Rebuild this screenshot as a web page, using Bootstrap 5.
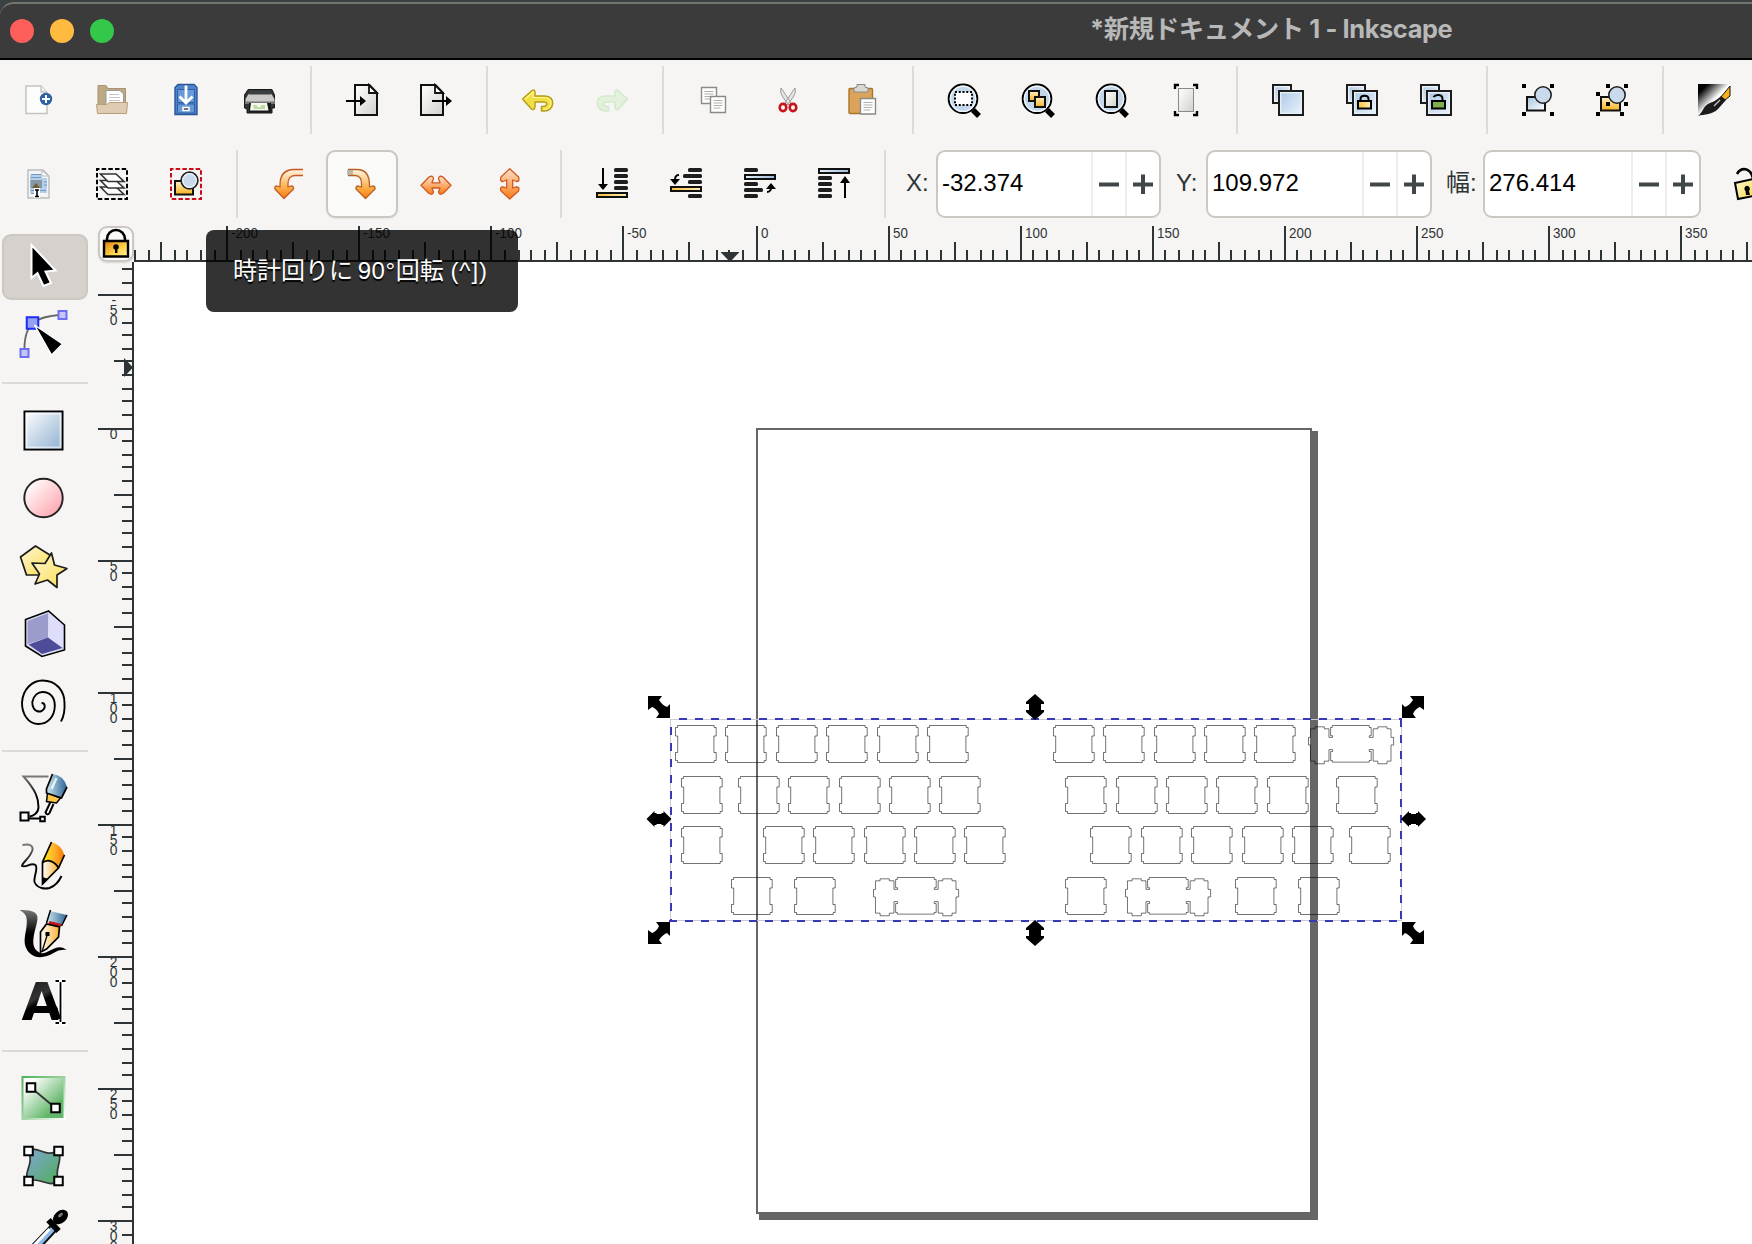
<!DOCTYPE html>
<html lang="ja">
<head>
<meta charset="utf-8">
<title>*新規ドキュメント 1 - Inkscape</title>
<link rel="stylesheet" href="https://cdn.jsdelivr.net/npm/bootstrap@5.3.0/dist/css/bootstrap.min.css">
<script src="https://cdn.jsdelivr.net/npm/bootstrap@5.3.0/dist/js/bootstrap.bundle.min.js"></script>
<style>
html,body{height:100%;overflow:hidden}
body{font-family:"Liberation Sans","Noto Sans CJK JP",sans-serif;background:#3a4142;color:#2e3436;line-height:1}
.app{width:1752px;height:1244px;padding-top:2px}
.app svg{display:block;flex:none}
.titlebar{height:58px;background:#3b3b3b;border-top:2px solid #75756f;border-bottom:2px solid #000;border-radius:14px 0 0 0;flex:none}
.lights{padding-left:10px;gap:16px}
.light{width:24px;height:24px;border-radius:50%;margin-top:-1px}
.wtitle{font:700 25.4px Inter,"Noto Sans CJK JP",sans-serif;letter-spacing:-.4px;line-height:30px;color:#b8b8b8;left:1090px;top:10px;white-space:nowrap}
.work{background:#f6f5f4}
.tbar{height:68px;padding-left:1px;flex:none;margin-bottom:16px}
.cmd{margin-top:6px}
.tb{width:74px;height:68px;flex:none;display:flex;align-items:center;justify-content:center}
.tb.hot{width:72px;margin:0 1px;background:#fafaf9;border:2px solid #cdc7c2;border-radius:9px;box-shadow:0 1px 2px #0001}
.vs{width:2px;margin:0 13px;background:#dcdad7;flex:none}
.spin{border:2px solid #cdc7c2;border-radius:9px;background:#fff;height:68px;flex:none;font-size:24px;color:#000}
.spin .val{flex:1;padding:0 0 3px 4px}
.spin .pm{width:34px;border-left:2px solid #efeeed;display:flex;align-items:center;justify-content:center}
.lbl{font-size:24px;padding-bottom:3px;flex:none;white-space:nowrap}
.side{width:98px;padding:8px 0 0 2px;flex:none}
.tool{width:86px;height:66px;margin-bottom:2px;padding-right:4px;display:flex;align-items:center;justify-content:center;flex:none}
.tool.sel{background:#d6d1cd;border:2px solid #cdc7c2;border-radius:9px;padding-right:2px}
.hs{width:86px;height:2px;background:#dcdad7;margin:12px 0 14px;flex:none}
.lockbtn{width:36px;height:36px;border:2px solid #cdc7c2;border-radius:9px;background:#fafaf9;flex:none;box-shadow:0 1px 2px #0002}
.tip{left:206px;top:230px;width:312px;height:82px;border-radius:8px;background:rgba(0,0,0,.8);color:#fff;font-size:24px;text-shadow:0 2px 1px #000;padding:29px 0 0 27px;white-space:nowrap;z-index:5}
.num{margin-left:-2px;letter-spacing:.6px}
.keys{letter-spacing:.9px}
text{font-family:"Liberation Sans",sans-serif;fill:#2e3436}
</style>
</head>
<body>
<svg width="0" height="0" class="position-absolute">
<defs>
<linearGradient id="blu" x2="1" y2="1"><stop stop-color="#fff"/><stop offset="1" stop-color="#8fb0d0"/></linearGradient>
<linearGradient id="blf" x2="1" y2="1"><stop stop-color="#a9c6e4"/><stop offset="1" stop-color="#eef5fb"/></linearGradient>
<linearGradient id="blr" x1="1" y1="1" x2="0" y2="0"><stop stop-color="#fff"/><stop offset="1" stop-color="#a9c3df"/></linearGradient>
<linearGradient id="pnk" x2="1" y2="1"><stop offset=".1" stop-color="#fff"/><stop offset="1" stop-color="#ff9aa5"/></linearGradient>
<linearGradient id="yel" x2="1" y2="1"><stop stop-color="#fff8d8"/><stop offset="1" stop-color="#fbdc4c"/></linearGradient>
<linearGradient id="gld" x2="0" y2="1"><stop stop-color="#fff0c8"/><stop offset="1" stop-color="#f8b41c"/></linearGradient>
<linearGradient id="gls" x2="1"><stop stop-color="#f9bf3c"/><stop offset="1" stop-color="#fff0b8"/></linearGradient>
<linearGradient id="bls" x2="1"><stop stop-color="#e8f1fa"/><stop offset="1" stop-color="#9dbbdb"/></linearGradient>
<linearGradient id="org" x2="0" y2="1"><stop stop-color="#fde0cc"/><stop offset="1" stop-color="#fb7c14"/></linearGradient>
<linearGradient id="ory" x2="0" y2="1"><stop stop-color="#fff6e6"/><stop offset=".6" stop-color="#fcb24e"/><stop offset="1" stop-color="#f9780c"/></linearGradient>
<linearGradient id="gry" x2="1" y2="1"><stop stop-color="#fff"/><stop offset="1" stop-color="#d2d2cc"/></linearGradient>
<linearGradient id="grn" x2="1" y2="1"><stop offset=".15" stop-color="#fff"/><stop offset=".75" stop-color="#63b76a"/></linearGradient>
<linearGradient id="grb" x1="0" x2="1" y2="1"><stop stop-color="#4fb358"/><stop offset=".5" stop-color="#9fd3a3"/><stop offset="1" stop-color="#fff"/></linearGradient>
<linearGradient id="msh" x2="1" y2="1"><stop stop-color="#7fa6d6"/><stop offset="1" stop-color="#4fae57"/></linearGradient>
<linearGradient id="pen" x2="1"><stop stop-color="#cfeaf2"/><stop offset="1" stop-color="#2d6494"/></linearGradient>
<linearGradient id="pcl" x2="1"><stop stop-color="#ffee00"/><stop offset=".5" stop-color="#ffb52e"/><stop offset="1" stop-color="#f57900"/></linearGradient>
<linearGradient id="wht" x2="1"><stop stop-color="#fff"/><stop offset="1" stop-color="#f8b030"/></linearGradient>
<linearGradient id="blk" x2="1" y2="1"><stop stop-color="#000"/><stop offset=".15" stop-color="#000"/><stop offset=".5" stop-color="#fff"/></linearGradient>
<linearGradient id="ink" x2=".4" y2="1"><stop stop-color="#111"/><stop offset=".5" stop-color="#333"/><stop offset=".6" stop-color="#000"/></linearGradient>
<linearGradient id="lck" x2="1" y2="1"><stop stop-color="#e07c10"/><stop offset=".6" stop-color="#ffd54a"/><stop offset="1" stop-color="#fff0a0"/></linearGradient>
<linearGradient id="fad" x2="0" y2="1"><stop stop-color="#777"/><stop offset=".5" stop-color="#000"/></linearGradient>
<g id="lens"><path d="M9 10l6 6" stroke="#000" stroke-width="5.5"/><circle cx="-1" cy="-1.200" r="14.300" fill="#c3d6ea" stroke="#000" stroke-width="2"/><circle cx="-1" cy="-1.200" r="12.600" fill="none" stroke="#eef4fa" stroke-width="1.400"/></g>
<g id="stack" stroke="#1c1c1c" stroke-width="2"><path fill="url(#blr)" d="M-15-15H3V3H-15z"/><path fill="none" stroke="#eef4fa" stroke-width="1.300" d="M-13.300-13.300H1.300V1.300H-13.300z"/><path fill="url(#blf)" d="M-9-9H15V15H-9z"/><path fill="none" stroke="#e8f0f8" stroke-width="1.300" d="M-7.300-7.300H13.300V13.300H-7.300z"/></g>
</defs></svg>

<div class="app d-flex flex-column position-relative">
  <div class="titlebar d-flex align-items-center position-relative">
    <div class="lights d-flex">
      <span class="light" style="background:#ff5f5b"></span><span class="light" style="background:#ffbb40"></span><span class="light" style="background:#34c84a"></span>
    </div>
    <div class="wtitle position-absolute">*新規ドキュメント 1 - Inkscape</div>
  </div>

  <div class="work d-flex flex-column flex-grow-1">
    <div class="tbar cmd d-flex" id="cmdbar"></div>
    <div class="d-flex tbar">
      <div class="d-flex" id="optbar"></div>
      <div class="d-flex align-items-center" id="spins"></div>
      <div class="d-flex align-items-center ms-auto">
        <svg width="20" height="36" viewBox="0 0 20 36"><path d="M5 8C9 1 18 1 21 12V17" fill="none" stroke="#000" stroke-width="2.6"/><path d="M3 17L21 13V30L6 33z" fill="url(#yel)" stroke="#000" stroke-width="2"/><path d="M14 20a3 3 0 0 1 3 5l1 4h-4l-.5-4a3 3 0 0 1 .5-5" fill="#000"/></svg>
      </div>
    </div>

    <div class="d-flex flex-grow-1" style="margin-top:-8px">
      <div class="side d-flex flex-column" id="tools"></div>
      <div class="d-flex flex-column">
        <div class="d-flex" style="height:36px">
          <div class="lockbtn d-flex justify-content-center"><svg width="28" height="32" viewBox="0 0 28 32"><path d="M5 13V11a9 9 0 0 1 18 0V13" fill="none" stroke="#000" stroke-width="2.600"/><path d="M2 13H26V28.500H2z" fill="url(#lck)" stroke="#000" stroke-width="2.400"/><circle cx="14" cy="19" r="2.800"/><path d="M13 20h2.400v5h-2.400z"/></svg></div>
          <svg id="hr" width="1618" height="36" viewBox="134 226 1618 36"></svg>
        </div>
        <div class="d-flex">
          <svg id="vr" width="36" height="982" viewBox="98 262 36 982"></svg>
          <svg id="cv" width="1618" height="982" viewBox="134 262 1618 982" style="background:#fff"></svg>
        </div>
      </div>
    </div>
  </div>
  <div class="tip position-absolute">時計回りに <span class="num">90°</span>回転 <span class="keys">(^])</span></div>
</div>

<script>
const pg=(x,y,w,h)=>`<path d="M${x} ${y}h${w}v${h}h${-w}z" fill="#fff" stroke="#8b8b85" stroke-width="1.4"/><path d="M${x+3} ${y+4}h${w-6}M${x+3} ${y+6.5}h${w-6}M${x+3} ${y+9}h${w-6}M${x+3} ${y+11.5}h${w-8}" stroke="#b0b0ab" stroke-width="1.2"/>`;
const dots=a=>a.map(([x,y])=>`<rect x="${x-2}" y="${y-2}" width="4" height="4" fill="#000"/>`).join('');
const bar=(x,w,y)=>`<rect x="${x}" y="${y-2}" width="${w}" height="4" rx="1.6" fill="#1e1e1e"/>`;
const slab=(y,f)=>`<rect x="-15" y="${y+1}" width="30" height="4" fill="url(#${f})" stroke="#111" stroke-width="2"/>`;
const cmd=[
 `<path d="M-12-14H3L9-7.500V13.500H-12z" fill="#fdfdfd" stroke="#c3c3bd" stroke-width="1.500"/><path d="M3-14V-8H9" fill="#eee" stroke="#c3c3bd" stroke-width="1.300"/><circle cx="8" cy="-1" r="6.200" fill="#2f5fa5"/><path d="M8-5V3M4-1H12" stroke="#fff" stroke-width="2"/>`,
 `<path d="M-14-14.500H-6L-4-11.500H13.500V5H-14z" fill="#bda982" stroke="#a8936c"/><path d="M-6-9.500H8L11.500-6V7H-6z" fill="#fff" stroke="#999"/><path d="M-3-5.500H7M-3-2.500H8M-3 .5H8" stroke="#c4c4c4" stroke-width="1.200"/><path d="M-15.500 4.500H-5L-3 2.500H15.500L14.500 13.500H-14.500z" fill="#dfcab2" stroke="#b79d7c"/>`,
 `<path d="M-8-15.500H8L11-12.500V14.500H-11V-12.500z" fill="#4d84cb" stroke="#2a5699" stroke-width="1.400"/><path d="M-8.500-10.500H8.500V2.500H-8.500zM-8.500 4H8.500V13H-8.500z" fill="#6799d8" stroke="#2e5fa5"/><path d="M0-14.500V1M-6.500-3.500L0 3L6.500-3.500" fill="none" stroke="#fff" stroke-width="2.800"/><path d="M-3 7.500v3h6v-3z" fill="#446" stroke="#fff" stroke-width="1.500"/>`,
 `<path d="M-12-10.500H12L14.500-5V8H12V13H-13V9L-15.500 8V-5z" fill="#333" stroke="#1b1b1b"/><path d="M-11.500-6H11.500L14.500-1V4H-14.500V-1z" fill="#c9c9c5"/><path d="M-11-9.500H11V-5.500H-11z" fill="#3a4040"/><path d="M-14.500 1.500H14.500V4H-14.500z" fill="#777"/><path d="M-11 3H11V12.500H-11z" fill="#1a1a1a"/><path d="M-9 3H7L8.500 10.500H-10z" fill="#f4f8ee"/><path d="M-7 5h4v2h4v-2h4v4h-11z" fill="#bcdca4"/>`,
 0,
 `<path d="M-7-15H7.500L15-7V15H-7z" fill="url(#gry)" stroke="#111" stroke-width="2"/><path d="M7-15V-7H15z" fill="#fff" stroke="#111" stroke-width="1.800"/><path d="M-16 1H0" stroke="#000" stroke-width="2"/><path d="M-2-4L4 1L-2 6z"/>`,
 `<path d="M-15-15H-.5L7-7V15H-15z" fill="url(#gry)" stroke="#111" stroke-width="2"/><path d="M-1-15V-7H7z" fill="#fff" stroke="#111" stroke-width="1.800"/><path d="M-4 1H11" stroke="#000" stroke-width="2"/><path d="M10-4L16 1L10 6z"/>`,
 0,
 `<path d="M-15.500-1L-6-9.500Q-3.500-11-3-8V-4H7C18-4 17 11 6 11H3.500V6.500C9 7 11 2.500 6 2H-3V7Q-4 11-6.500 9z" fill="#f0df45" stroke="#b79b14" stroke-width="1.400" stroke-linejoin="round"/><path d="M-12.500-1L-5-8V-2.500H7C15-2 14 9 6 9.500" fill="none" stroke="#fff68e" stroke-width="1.200"/>`,
 `<g opacity=".45"><path d="M15.500-1L6-9.500Q3.500-11 3-8V-4H-7C-18-4-17 11-6 11H-3.500V6.500C-9 7-11 2.500-6 2H3V7Q4 11 6.500 9z" fill="#ccefbe" stroke="#a8dc9a" stroke-width="1.500" stroke-linejoin="round"/></g>`,
 0,
 pg(-12.500,-12.500,15,16)+pg(-3.500,-3.500,15,16),
 `<path d="M-7-12C-9-6-3 0 1 5L3 3C-1-3-4-8-7-12zM7-12C9-6 3 0-1 5L-3 3C1-3 4-8 7-12z" fill="#e4e4e4" stroke="#999"/><ellipse cx="-5" cy="7.500" rx="3.300" ry="3.600" fill="none" stroke="#c5151c" stroke-width="2.600"/><ellipse cx="5" cy="7.500" rx="3.300" ry="3.600" fill="none" stroke="#c5151c" stroke-width="2.600"/>`,
 `<rect x="-13" y="-11.500" width="23.500" height="25" rx="1" fill="#dba45a" stroke="#a87429" stroke-width="1.400"/><path d="M-8-10V-12L-5-13V-15.500H3V-13L6-12V-8H-8z" fill="#d6d8d3" stroke="#888"/>`+pg(-1.500,-1.500,15,15.500),
 0,
 `<use href="#lens"/><rect x="-9" y="-8" width="17" height="13" fill="#fff" stroke="#000" stroke-width="2" stroke-dasharray="2 1.750"/>`,
 `<use href="#lens"/><path d="M-9-9H1V1H-9z" fill="url(#gld)" stroke="#111" stroke-width="2"/><path d="M-3-3H7V7H-3z" fill="url(#gld)" stroke="#111" stroke-width="2"/>`,
 `<use href="#lens"/><rect x="-7" y="-9" width="12" height="16" fill="url(#gry)" stroke="#111" stroke-width="2"/>`,
 `<rect x="-7.500" y="-11.500" width="15" height="23" fill="url(#gry)" stroke="#888"/><path d="M-11-11V-15H-7M7-15H11V-11M-11 11V15H-7M7 15H11V11" fill="none" stroke="#000" stroke-width="2.400"/>`,
 0,
 `<use href="#stack"/>`,
 `<use href="#stack"/><path d="M-1.500 2V-1C-1.500-5.500 6.500-5.500 6.500-1V2" fill="none" stroke="#000" stroke-width="2"/><path d="M-4 1H9V8.500H-4z" fill="url(#gls)" stroke="#000" stroke-width="2"/>`,
 `<use href="#stack"/><path d="M-2.500-3C-.5-6 6.500-6 6.500-1V2" fill="none" stroke="#000" stroke-width="2"/><path d="M-4 1H9V8.500H-4z" fill="#7fae4a" stroke="#000" stroke-width="2"/>`,
 0,
 `<path d="M-11-3H7V10.500H-11z" fill="url(#blr)" stroke="#111" stroke-width="2"/><circle cx="5" cy="-5" r="8.200" fill="#c9daec" stroke="#222" stroke-width="1.600"/>`+dots([[-14,-14],[14,-14],[-14,14],[14,14]]),
 `<path d="M-11-3H8V10.500H-11z" fill="url(#gld)" stroke="#111" stroke-width="2"/><circle cx="5" cy="-5" r="8.200" fill="#c9daec" stroke="#222" stroke-width="1.600"/>`+dots([[-14,-6],[-4,-14],[14,-14],[14,4],[-4,4],[-14,14],[10,14]]),
 0,
 `<path d="M-16-16H16V-12L-10 16H-16z" fill="url(#blk)"/><path d="M16-14V-4L11 0L7-3z" fill="#f8b01c" stroke="#111"/><path d="M7-4L12 0L4 9C-2 15-9 14-16 16C-11 12-11 7-6 4C-2 2 2 1 7-4z" fill="#1c1c1c"/><path d="M6 0L0 6" stroke="#bbb" stroke-width="1.500"/>`
];
const opt=[
 `<path d="M-10-14H5L11-8V14H-10z" fill="#f4f6f6" stroke="#b9bcbe" stroke-width="1.400"/><path d="M-8-9H4V-6H9V9H-8z" fill="#b7d0ea"/><path d="M4-13.500V-8H10.500z" fill="#fff" stroke="#b9bcbe"/><path d="M-7-9.500H3M-7-6.500H3M-7 6.500H8M6-2H9M6 1H9M-7 9.500H-3" stroke="#6f97c8" stroke-width="1.200"/><rect x="-7.500" y="-4" width="11.500" height="8" fill="#8798a4"/><path d="M-6 4l4-5 4 5z" fill="#6c6038"/><path d="M-4 4H2V14H-4z" fill="#fff"/><path d="M-3 6H1M-3 12.500H1M-1 6V12" stroke="#000" stroke-width="1.600"/>`,
 `<rect x="-15" y="-15" width="30" height="30" fill="none" stroke="#000" stroke-width="2" stroke-dasharray="4.500 2.170" stroke-dashoffset="2"/><g fill="#fff" stroke="#333" stroke-width="1.600"><path d="M-11.500 3H4L12 10.500H-4z"/><path d="M-11.500-3.500H4L12 4H-4z"/><path d="M-11.500-10H4L12-2.500H-4z"/></g>`,
 `<rect x="-15" y="-15" width="30" height="30" fill="none" stroke="#cc0a18" stroke-width="2" stroke-dasharray="4.500 2.170" stroke-dashoffset="2"/><path d="M-11-3H7V10.500H-11z" fill="url(#gld)" stroke="#111" stroke-width="2"/><circle cx="3.500" cy="-3.500" r="8.300" fill="#c9daec" stroke="#222" stroke-width="1.800"/><circle cx="3.500" cy="-3.500" r="6.800" fill="none" stroke="#eef4fa" stroke-width="1.200"/>`,
 0,
 `<path d="M15-14.500H6C-3-14.500-8-9-8 1V3L-11 2Q-14 2-13 5L-4 14.500L5.500 5Q6 2 3 2L0 3V0C0-5 2-8.500 7-8.500H15" fill="url(#ory)" stroke="#c65a22" stroke-width="1.300" stroke-linejoin="round"/>`,
 `<path d="M-14-14.500H-5C3-14.500 7.500-9 7.500 1V3L10.500 2Q13.500 2 13 5L3.500 14.500L-6 5Q-6.500 2-3.500 2L-.5 3V0C-.5-5-2-8.500-7-8.500H-14" fill="url(#ory)" stroke="#b86022" stroke-width="1.300" stroke-linejoin="round"/><path d="M-15-14H-9V-9H-15z" fill="#a9a59c" opacity=".75"/>`,
 `<path d="M-15 1.200L-7-7Q-3-9-2.500-5.500L-4-1.200H4L2.500-5.500Q3-9 7-7L15 1.200L7 9.500Q3 11.500 2.500 8L4 4H-4L-2.500 8Q-3 11.500-7 9.500z" fill="url(#org)" stroke="#cf5a20" stroke-width="1.300" stroke-linejoin="round"/>`,
 `<path d="M-.3-15.300L8.500-7Q10-2.500 6.500-2.500L2.700-4V4L6.500 2.800Q10 2.800 8.500 7L-.3 15L-9 7Q-10.500 2.800-7 2.800L-3.300 4V-4L-7-2.500Q-10.500-2.500-9-7z" fill="url(#org)" stroke="#cf5a20" stroke-width="1.300" stroke-linejoin="round"/>`,
 0,
 [-14,-8,-2,4].map(y=>bar(2,14,y)).join('')+slab(8,'gls')+`<path d="M-9-16V1" stroke="#000" stroke-width="2"/><path d="M-14 0H-4L-9 6z"/>`,
 bar(2,14,-14)+bar(-3,19,-8)+bar(2,14,-2)+bar(2,14,12)+slab(2,'gls')+`<path d="M-7-9C-11-9-11-6-11-3" fill="none" stroke="#000" stroke-width="2"/><path d="M-16-5H-6L-11 1z"/>`,
 bar(-16,14,-14)+bar(-16,14,0)+bar(-16,19,6)+bar(-16,14,12)+slab(-10,'bls')+`<path d="M7 8C11 8 11 5 11 2" fill="none" stroke="#000" stroke-width="2"/><path d="M6 5H16L11-1z"/>`,
 [-6,0,6,12].map(y=>bar(-16,14,y)).join('')+slab(-16,'bls')+`<path d="M11 14V-2" stroke="#000" stroke-width="2"/><path d="M6-1H16L11-8z"/>`,
 0
];
const mk=(a,hot)=>a.map((s,i)=>s===0?'<div class="vs"></div>':`<div class="tb${i===hot?' hot':''}"><svg width="36" height="36" viewBox="-18 -18 36 36">${s}</svg></div>`).join('');
document.getElementById('cmdbar').innerHTML=mk(cmd);
document.getElementById('optbar').innerHTML=mk(opt,5);
document.getElementById('spins').innerHTML=[['X:','-32.374',225,7,30],['Y:','109.972',226,15,30],['幅:','276.414',218,14,37]].map(([l,v,w,m,lw])=>
 `<span class="lbl" style="margin-left:${m}px;width:${lw}px">${l}</span><div class="spin d-flex" style="width:${w}px"><div class="val d-flex align-items-center">${v}</div><div class="pm"><svg width="20" height="20"><path d="M0 10.500H20" stroke="#3f4749" stroke-width="4"/></svg></div><div class="pm"><svg width="20" height="20"><path d="M0 10.500H20M10 .5V20" stroke="#3f4749" stroke-width="4"/></svg></div></div>`).join('');

const sq=(x,y,s,f='#fff',c='#000',w=2)=>`<rect x="${x-s/2}" y="${y-s/2}" width="${s}" height="${s}" fill="${f}" stroke="${c}" stroke-width="${w}"/>`;
const tools=[
 `<path d="M-13-22V11L-7 6L-1 19L6.500 16L1 4.500L11 3.500z" stroke="#fff" stroke-width="2" fill="#000"/>`,
 `<path d="M-19 18C-20-8-12-19 19-20" fill="none" stroke="#666" stroke-width="1.800"/>${sq(-19,18,8,'#c5c6f5','#6c6ff2')}${sq(19,-20,8,'#c5c6f5','#6c6ff2')}${sq(-11,-12,11.500,'#98a0f4','#1b2cf5')}<path d="M-9-10L19 9L8 20z" stroke="#fff" stroke-width="1.500"/>`,
 0,
 `<rect x="-19" y="-19.500" width="38" height="38" fill="url(#blu)" stroke="#000" stroke-width="2"/><rect x="-17" y="-17.500" width="34" height="34" fill="none" stroke="#fff" stroke-opacity=".6" stroke-width="2"/>`,
 `<circle cx="0" cy="-1" r="19.200" fill="url(#pnk)" stroke="#222" stroke-width="1.900"/>`,
 `<g fill="url(#yel)" stroke="#1c1c1c" stroke-width="1.700" stroke-linejoin="round"><path d="M-8-21L-23-10L-17 8H-3L8-11z"/><path d="M8-14L11-2L23.500 1.500L13.500 8V20.500L4 13L-8.500 17L-4 7L-11.500-4L1.500-3.500z"/></g>`,
 `<path d="M5-24L-18-15.500V11L-1.500 21.500L21 15V-10z" fill="#dcdcf4"/><path d="M5-22L-16-14V9L4.500 2.500z" fill="#9c9ccc"/><path d="M5-22L19.500-9V13.500L4.500 2.500z" fill="#dedefc"/><path d="M4.500 2.500L-15 9.500L-1.500 19L19 13z" fill="#4c4c98"/><path d="M5-24L-18-15.500V11L-1.500 21.500L21 15V-10z" fill="none" stroke="#000" stroke-width="1.600"/>`,
 `<path d="M-2 0C2 0 3 6-3 8.500C-9 9-11.500 4-11.200-1C-10-8-5-11-1-11C8-11 11.500-4 11.300 3C11 14 4 21-5 21C-16 21-21.500 10-21.500 0C-21-14-11-22.500-1-22.500C13-22.500 21-12 21 0C21.500 8 20 14 17.500 18.500" fill="none" stroke="#000" stroke-width="1.900"/>`,
 0,
 `<path d="M5-22.500H-20C-7-8-5 0-5 8C-5 14-10 17-14 17.500M-16 19.500H1" fill="none" stroke="url(#fad)" stroke-width="1.900"/>${sq(-19,17.500,8)}${sq(-1,20,4.500)}<path d="M7 3L2 13.500Q4 17 6 14L10 5" fill="#fff" stroke="#000" stroke-width="2"/><path d="M4-6L17-1L13 4L3 2.500z" fill="#fbc64a" stroke="#000" stroke-width="1.500"/><path d="M9-25Q20-24 23.500-12L18-1L2.500-6L5-13z" fill="url(#pen)"/><path d="M9-25L3-10V-6L18-1L23.500-12" fill="none" stroke="#000" stroke-width="1.700"/><path d="M13-21L8-10" stroke="#fff" stroke-width="2.500" opacity=".8"/>`,
 `<path d="M-21-22Q-10-24-11-17C-14-8-21-5-21.500-1C-17 1-13-5-8-2C-5 1-10 10-9 15C-6 22 2 22 6 21Q14 18 18 9" fill="none" stroke="url(#fad)" stroke-width="1.900"/><path d="M-1-4L4-7L11-5L15 1L0 17z" fill="url(#wht)"/><path d="M8-25Q18-22 21-12L15 1Q10-7-1-5z" fill="url(#pcl)"/><path d="M8-25L-1-5V17L15 1L21-12M-1-4C4-9 12-5 15 1" fill="none" stroke="#000" stroke-width="1.700"/><path d="M-1 10L5 12L-1 18z"/>`,
 `<path d="M-24-25Q-6-26-6-17C-6-8-16 10-5 17C3 23 12 6 23 15Q16 14 10 18C2 23-8 24-14 18C-24 7-15-4-17-17Q-18-22-24-25z" fill="url(#fad)"/><path d="M6-24L23.500-20L18-9L3-12z" fill="url(#pen)"/><path d="M7-25L3-12M23.500-20L18-9" stroke="#000" stroke-width="1.500"/><path d="M6-14L18-11L17-8L5-11z" fill="#c4151c"/><path d="M-3-3L3-11L16-8L15 2L3 14L-3 17z" fill="url(#wht)" stroke="#000" stroke-width="1.700"/><path d="M-1 15L4-1" stroke="#000" stroke-width="1.300"/><rect x="2" y="-3" width="4" height="4"/>`,
 `<text x="-22" y="17" font-size="52" style="font-family:'DejaVu Sans';font-weight:700;fill:url(#ink)">A</text><path d="M11-22H16M18-22H23M17-22V20M11 20H16M18 20H23" stroke="#fff" stroke-width="5"/><path d="M12-22H15.500M18.500-22H22M17-21V19M12 20H15.500M18.500 20H22" stroke="#000" stroke-width="1.800"/><path d="M12 4L16 16" stroke="#000" stroke-width="3"/>`,
 0,
 `<rect x="-21" y="-22" width="42" height="42" fill="url(#grn)" stroke="url(#grb)" stroke-width="2"/><path d="M-12-11L12 9" stroke="#333" stroke-width="1.800"/>${sq(-12.500,-11.500,8.500)}${sq(12,9,8.500)}`,
 `<path d="M-15-16C-5-22 0-9 15-16C20-6 10 2 15 14C5 22-4 9-15 14C-21 5-9-2-15-16z" fill="url(#msh)" stroke="#333" stroke-width="1.700"/>${sq(-15,-16,8.500)}${sq(15,-16,8.500)}${sq(-15,14,8.500)}${sq(15,14,8.500)}`,
 `<path d="M8-10L-16 15L-12 22L14-6z" fill="#8db9ea" stroke="#111" stroke-width="2"/><path d="M6-6L-11 12" stroke="#fff" stroke-width="3"/><ellipse cx="17" cy="-18" rx="8.500" ry="6" transform="rotate(-42 17 -18)"/><path d="M5-15L15-4" stroke="#000" stroke-width="6"/><ellipse cx="17" cy="-20" rx="3" ry="1.500" transform="rotate(-40 17 -20)" fill="#777"/>`
];
document.getElementById('tools').innerHTML=tools.map((s,i)=>s===0?'<div class="hs"></div>':`<div class="tool${i===0?' sel':''}"><svg width="52" height="54" viewBox="-26.500 -27 52 54">${s}</svg></div>`).join('');

/* rulers: 132.15 px per 50 mm, ticks snapped to the 2 px device grid */
const step=13.215, snap=v=>Math.floor(v/2)*2+1;
let h='',v='';
for(let i=-60;i<=80;i++){
  const x=snap(756+i*step), y=snap(428+i*step), big=i%10===0, mid=i%5===0;
  if(x>133&&x<1752){
    h+=`<path d="M${x} ${big?226:mid?242:250}V261"/>`;
    if(big)h+=`<text x="${x+4}" y="237.500" font-size="13.800" textLength="${(i<0?4.5:0)+7.45*String(Math.abs(i*5)).length}" lengthAdjust="spacingAndGlyphs" stroke="none">${i*5}</text>`;
  }
  if(y>262&&y<1250){
    v+=`<path d="M${big?98:mid?114:122} ${y}H133"/>`;
    if(big)v+=`<text text-anchor="middle" font-size="13.800" stroke="none">${String(i*5).split('').map((c,k)=>`<tspan x="113.700" y="${y+9.5+k*10}">${c}</tspan>`).join('')}</text>`;
  }
}
document.getElementById('hr').innerHTML=`<g stroke="#2e3436" stroke-width="2">${h}<path d="M134 261H1752"/></g><path d="M720.500 252H739.500L730 262z" fill="#2e3436"/>`;
document.getElementById('vr').innerHTML=`<g stroke="#2e3436" stroke-width="2">${v}<path d="M133 262V1244"/></g><path d="M124 358V377L133 367.500z" fill="#2e3436"/>`;

const KEY='M2.300 0H39V2H41V10.500H38.700V27H41V35H39V37H2.300V35H.3V27H2.500V10.500H.3V2H2.300z';
const STAB='M72 0H184V6H190V31H184V36H196V10H210V4H238V10H250V36H258V59H250V108H238V116H210V108H196V73H184V79H190V106H184V111H72V106H67V79H73V73H62V108H48V116H20V108H6V59H0V36H6V10H20V4H48V10H62V36H73V31H67V6H72z';
const rows=[[725.5,[675.3,725.3,775.7,826.3,876.7,927.3,1053,1103.3,1153.7,1204.3,1254.4],[1308]],
[776.5,[681.3,738.3,788.3,838.7,889.3,939.4,1065.4,1116.3,1166.3,1216.4,1267.3,1336.3]],
[826.5,[681.3,763.3,813.3,864,914.3,964.4,1090.4,1141.3,1191.4,1242.3,1292.3,1349.3]],
[877.5,[731.4,794.3,1065.4,1235.3,1298.3],[873.3,1125]]];
let k='';
rows.forEach(([y,xs,st=[]])=>{xs.forEach(x=>k+=`<path transform="translate(${Math.round(x)+.2} ${y})" d="${KEY}"/>`);
 st.forEach(x=>k+=`<path transform="translate(${Math.round(x)+.5} ${y}) scale(.33)" stroke-width="3" d="${STAB}"/>`)});
const C='M0 0H14L11 4C14 8 16 10 19 11L22 8V22H8L11 18C10 15 7 12 4 11L0 14z';
const H='M0 9L8 0V4H10V5H16V4H18V0L26 9L18 18V14H16V13H10V14H8V18z';
const V='M9 0L18 8V10H15V16H18V18L9 26L0 18V16H3V10H0V8z';
const HH='M0 9L8 1V3H10V4H15V3H17V1L25 9L17 17V15H15V14H10V15H8V17z';
document.getElementById('cv').innerHTML=`
<path d="M1310 431H1318V1220H759V1212H1310z" fill="#666"/>
<rect x="757" y="429" width="554" height="784" fill="none" stroke="#666" stroke-width="2"/>
<g fill="none" stroke="#000" stroke-opacity=".55" stroke-width="1">${k}</g>
<rect x="670.500" y="719.500" width="731" height="201" fill="none" stroke="#ccc"/>
<g fill="none" stroke="#3838b8" stroke-width="2" stroke-dasharray="8 8"><path d="M679 719H1402"/><path d="M671 727V921"/><path d="M669 921H1402"/><path d="M1401 719V921"/></g>
<path transform="translate(648 696)" d="${C}"/><path transform="translate(1424 696) scale(-1 1)" d="${C}"/>
<path transform="translate(648 944) scale(1 -1)" d="${C}"/><path transform="translate(1424 944) scale(-1 -1)" d="${C}"/>
<path transform="translate(646.500 810)" d="${HH}"/><path transform="translate(1401 810)" d="${HH}"/>
<path transform="translate(1026 694)" d="${V}"/><path transform="translate(1026 920)" d="${V}"/>`;
</script>
</body>
</html>
